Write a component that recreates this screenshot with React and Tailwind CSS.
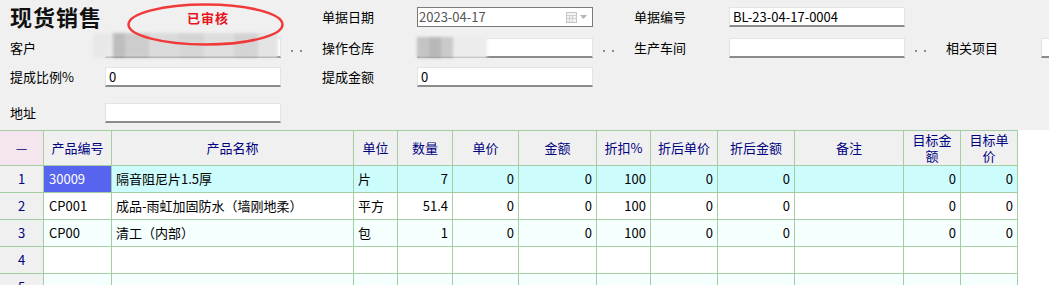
import React from "react";

const Dots = () => (
  <div className="flex items-center gap-[7px] ml-[10px] mt-[6px] shrink-0">
    <span className="block w-[2px] h-[2px] bg-[#8a8a8a]" />
    <span className="block w-[2px] h-[2px] bg-[#8a8a8a]" />
  </div>
);

const Input = ({ value, className = "" }) => (
  <div
    className={
      "w-[176px] shrink-0 h-[20px] bg-white border border-[#e4e4e4] border-b-2 border-b-[#8c8c8c] pl-[3px] text-[13px] leading-[17px] text-black " +
      className
    }
  >
    {value}
  </div>
);

const Label = ({ children }) => (
  <div className="w-[95px] shrink-0 text-[13px] leading-[20px] text-black whitespace-nowrap">{children}</div>
);

const cols = [
  "产品编号", "产品名称", "单位", "数量", "单价", "金额", "折扣%", "折后单价", "折后金额", "备注",
];

const rows = [
  { n: "1", code: "30009", name: "隔音阻尼片1.5厚", unit: "片", v: ["7", "0", "0", "100", "0", "0", "", "0", "0"] },
  { n: "2", code: "CP001", name: "成品-雨虹加固防水（墙刚地柔）", unit: "平方", v: ["51.4", "0", "0", "100", "0", "0", "", "0", "0"] },
  { n: "3", code: "CP00", name: "清工（内部）", unit: "包", v: ["1", "0", "0", "100", "0", "0", "", "0", "0"] },
  { n: "4", code: "", name: "", unit: "", v: ["", "", "", "", "", "", "", "", ""] },
  { n: "5", code: "", name: "", unit: "", v: ["", "", "", "", "", "", "", "", ""] },
];

const rowBg = ["bg-[#cdfcfc]", "bg-white", "bg-[#f4fffe]", "bg-white", "bg-[#f4fffe]"];

const cell = "border-r border-b border-[#a3cda3]";

export default function App() {
  return (
    <div className="w-[1049px] h-[285px] overflow-hidden bg-white font-['Noto_Sans_CJK_SC',sans-serif] text-black">
      {/* Form */}
      <div className="relative h-[130px] bg-[#f0f0f0] pl-[10px] pt-[7px] overflow-hidden">
        {/* Row 1 */}
        <div className="flex h-[20px]">
          <div className="w-[312px] shrink-0 flex items-center">
            <div className="text-[22px] leading-[22px] font-bold tracking-[1px] text-[#111] -mt-[3px]">现货销售</div>
          </div>
          <div className="w-[312px] shrink-0 flex">
            <Label>单据日期</Label>
            <div className="w-[176px] shrink-0 h-[20px] bg-white border border-[#7a7a7a] flex items-center justify-between pl-[1px] pr-[5px]">
              <span className="text-[13px] leading-[18px] text-[#555]">2023-04-17</span>
              <div className="flex items-center gap-[3px]">
                <svg width="11" height="11" viewBox="0 0 11 11">
                  <rect x="0.5" y="0.5" width="10" height="10" fill="#f4f4f4" stroke="#c4c4c4" />
                  <path d="M0.5 3.5H10.5M0.5 6.5H10.5M3.5 3.5V10.5M6.5 3.5V10.5" stroke="#d0d0d0" />
                </svg>
                <svg width="7" height="4" viewBox="0 0 7 4">
                  <path d="M0 0H7L3.5 4Z" fill="#b5b5b5" />
                </svg>
              </div>
            </div>
          </div>
          <div className="w-[312px] shrink-0 flex">
            <Label>单据编号</Label>
            <Input value="BL-23-04-17-0004" className="pl-[1px]" />
          </div>
        </div>

        {/* Row 2 */}
        <div className="flex h-[20px] mt-[11px]">
          <div className="w-[312px] shrink-0 flex">
            <Label>客户</Label>
            <div className="relative shrink-0">
              <Input value="" />
              <div className="absolute -left-[12px] -top-[5px] w-[185px] h-[25px] flex blur-[1.5px] opacity-90">
                <div className="w-[20px] bg-[#e8e8e8]" />
                <div className="w-[12px] bg-[#b8b8b8]" />
                <div className="w-[24px] bg-[#c8c8c8]" />
                <div className="w-[30px] bg-[#d8d8d8]" />
                <div className="w-[25px] bg-[#d2d2d2]" />
                <div className="w-[30px] bg-[#dcdcdc]" />
                <div className="w-[24px] bg-[#d0d0d0]" />
                <div className="w-[20px] bg-[#e2e2e2]" />
              </div>
            </div>
            <Dots />
          </div>
          <div className="w-[312px] shrink-0 flex">
            <Label>操作仓库</Label>
            <div className="relative shrink-0">
              <Input value="" />
              <div className="absolute left-0 -top-[1px] w-[70px] h-[21px] flex blur-[1.5px]">
                <div className="w-[12px] bg-[#c4c4c4]" />
                <div className="w-[12px] bg-[#b8b8b8]" />
                <div className="w-[12px] bg-[#cacaca]" />
                <div className="w-[34px] bg-[#ececec]" />
              </div>
            </div>
            <Dots />
          </div>
          <div className="w-[312px] shrink-0 flex">
            <Label>生产车间</Label>
            <Input value="" />
            <Dots />
          </div>
          <div className="w-[312px] shrink-0 flex">
            <Label>相关项目</Label>
            <Input value="" />
          </div>
        </div>

        {/* Row 3 */}
        <div className="flex h-[20px] mt-[9px]">
          <div className="w-[312px] shrink-0 flex">
            <Label>提成比例%</Label>
            <Input value="0" />
          </div>
          <div className="w-[312px] shrink-0 flex">
            <Label>提成金额</Label>
            <Input value="0" />
          </div>
        </div>

        {/* Row 4 */}
        <div className="flex h-[20px] mt-[16px]">
          <div className="w-[312px] shrink-0 flex">
            <Label>地址</Label>
            <Input value="" />
          </div>
        </div>

        {/* Audit stamp */}
        <div className="absolute left-[127px] top-[3px] w-[158px] h-[43px]">
          <svg width="158" height="43" viewBox="0 0 158 43" className="absolute inset-0">
            <ellipse cx="78.5" cy="21.5" rx="77" ry="20" fill="none" stroke="#f03a3a" strokeWidth="2.5" />
          </svg>
          <div className="absolute left-[60px] top-[8px] text-[13px] leading-[14px] font-bold text-[#e8141b] tracking-[1px]">已审核</div>
        </div>
      </div>

      {/* Grid */}
      <div className="w-[1018px] grid grid-cols-[44px_68px_242px_44px_55px_66px_78px_54px_67px_77px_109px_57px_57px] border-t border-[#a3cda3] text-[13px]">
        {/* Header */}
        <div className={`${cell} h-[35px] bg-[#f5e5ee] flex items-center justify-center text-[#000080]`}>—</div>
        {cols.map((c) => (
          <div key={c} className={`${cell} h-[35px] bg-[#f0f0f0] flex items-center justify-center text-[#000080]`}>
            {c}
          </div>
        ))}
        <div className={`${cell} h-[35px] bg-[#f0f0f0] flex flex-col items-center justify-center text-[#000080] leading-[16px]`}>
          <span>目标金</span>
          <span>额</span>
        </div>
        <div className={`${cell} h-[35px] bg-[#f0f0f0] flex flex-col items-center justify-center text-[#000080] leading-[16px]`}>
          <span>目标单</span>
          <span>价</span>
        </div>

        {/* Rows */}
        {rows.map((r, i) => (
          <React.Fragment key={r.n}>
            <div className={`${cell} h-[27px] bg-[#f0f0f0] flex items-center justify-center text-[#000080]`}>{r.n}</div>
            <div
              className={`${cell} h-[27px] flex items-center pl-[5px] ${
                i === 0 ? "bg-[#5765ee] text-white" : rowBg[i]
              }`}
            >
              {r.code}
            </div>
            <div className={`${cell} h-[27px] flex items-center pl-[4px] whitespace-nowrap ${rowBg[i]}`}>{r.name}</div>
            <div className={`${cell} h-[27px] flex items-center pl-[4px] whitespace-nowrap ${rowBg[i]}`}>{r.unit}</div>
            {r.v.map((v, j) => (
              <div
                key={j}
                className={`${cell} h-[27px] flex items-center justify-end pr-[4px] ${rowBg[i]}`}
              >
                {v}
              </div>
            ))}
          </React.Fragment>
        ))}
      </div>
    </div>
  );
}
